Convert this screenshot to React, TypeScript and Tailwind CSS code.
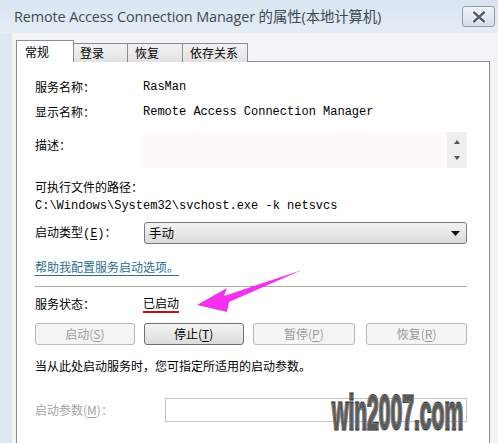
import React from "react";

const cjk = "font-['Noto_Sans_CJK_SC',sans-serif]";
const mono = "font-['Liberation_Mono','Noto_Sans_CJK_SC',monospace]";

const Key: React.FC<{ k: string }> = ({ k }) => (
  <>
    (<span className="underline underline-offset-2">{k}</span>)
  </>
);

const Btn: React.FC<{ label: string; k: string; enabled?: boolean; w: string }> = ({
  label,
  k,
  enabled,
  w,
}) => (
  <div
    className={`${w} h-[22px] flex items-center justify-center rounded-[3px] text-[12px] ${
      enabled
        ? "border border-[#707070] bg-gradient-to-b from-[#f4f4f4] to-[#dcdcdc] text-black"
        : "border border-[#b5b9bd] bg-[#f4f4f4] text-[#9a9a9a]"
    }`}
  >
    {label}
    <Key k={k} />
  </div>
);

const App: React.FC = () => {
  return (
    <div className={`relative w-[498px] h-[443px] overflow-hidden bg-[#dfe7f0] ${cjk}`}>
      {/* title bar */}
      <div className="h-[33px] flex items-center pl-[14px] pr-[3px] bg-gradient-to-b from-[#d9e4f0] to-[#e6edf5]">
        <span className="text-[14.4px] text-[#3e4852] font-['Open_Sans','Noto_Sans_CJK_SC',sans-serif] tracking-[-0.1px]">
          Remote Access Connection Manager 的属性(本地计算机)
        </span>
        <div className="ml-auto w-[33px] h-[21px] rounded-[3px] border border-[#8d9db2] bg-gradient-to-b from-[#eef3f9] to-[#d3deea] flex items-center justify-center">
          <svg width="14" height="12" viewBox="0 0 14 12">
            <path d="M2 1.5 L12 10.5 M12 1.5 L2 10.5" stroke="#fff" strokeWidth="4.5" strokeLinecap="round" />
            <path d="M2 1.5 L12 10.5 M12 1.5 L2 10.5" stroke="#56606c" strokeWidth="2.4" strokeLinecap="round" />
          </svg>
        </div>
      </div>

      {/* client area */}
      <div className="ml-[12px] h-[410px] bg-[#f3f4f6] pl-[4px] pr-[8px] pt-[7px]">
        {/* tabs */}
        <div className="flex items-end h-[22px] relative z-10 text-[12px] text-black">
          <div className="w-[58px] h-[22px] bg-white border border-b-0 border-[#898c95] pl-[8px] pt-[2px]">常规</div>
          <div className="w-[54px] h-[19px] bg-gradient-to-b from-[#f2f2f2] to-[#e2e2e2] border border-l-0 border-b-0 border-[#898c95] pl-[6px] leading-[18px]">登录</div>
          <div className="w-[55px] h-[19px] bg-gradient-to-b from-[#f2f2f2] to-[#e2e2e2] border border-l-0 border-b-0 border-[#898c95] pl-[7px] leading-[18px]">恢复</div>
          <div className="w-[65px] h-[19px] bg-gradient-to-b from-[#f2f2f2] to-[#e2e2e2] border border-l-0 border-b-0 border-[#898c95] pl-[7px] leading-[18px]">依存关系</div>
        </div>

        {/* panel */}
        <div className="-mt-px h-[390px] bg-white border border-[#898c95] pl-[18px] pr-[22px] pt-[15px] text-[12px] text-black">
          <div className="flex items-center h-[20px]">
            <span className="w-[108px]">服务名称：</span>
            <span className={mono}>RasMan</span>
          </div>
          <div className="flex items-center h-[20px] mt-[5px]">
            <span className="w-[108px]">显示名称：</span>
            <span className={mono}>Remote Access Connection Manager</span>
          </div>
          <div className="flex h-[36px] mt-[10px]">
            <span className="w-[108px] pt-[4px] leading-[18px]">描述：</span>
            <div className="flex-1 flex">
              <div className="flex-1 bg-[#fefafa]" />
              <div className="w-[20px] bg-[#efefef] flex flex-col items-center justify-between py-[8px]">
                <svg width="6" height="4" viewBox="0 0 6 4"><path d="M0 4 L3 0 L6 4Z" fill="#555" /></svg>
                <svg width="6" height="4" viewBox="0 0 6 4"><path d="M0 0 L3 4 L6 0Z" fill="#555" /></svg>
              </div>
            </div>
          </div>
          <div className="h-[19px] mt-[9px] flex items-center">可执行文件的路径：</div>
          <div className={`h-[19px] flex items-center ${mono}`}>C:\Windows\System32\svchost.exe -k netsvcs</div>
          <div className="flex items-center h-[22px] mt-[7px]">
            <span className="w-[109px]">
              启动类型<span className={mono}>(</span>
              <span className="underline underline-offset-2">E</span>
              <span className={mono}>)</span>：
            </span>
            <div className="flex-1 h-[22px] flex items-center rounded-[3px] border border-[#7a7a7a] bg-gradient-to-b from-[#f3f3f3] to-[#dadada] pl-[4px] pr-[6px]">
              <span className="text-[12.5px]">手动</span>
              <svg className="ml-auto" width="9" height="5" viewBox="0 0 9 5"><path d="M0 0 L9 0 L4.5 5Z" fill="#111" /></svg>
            </div>
          </div>
          <div className="h-[20px] mt-[13px] flex items-center">
            <span className="text-[#2a6f8e] underline underline-offset-[3px]">帮助我配置服务启动选项。</span>
          </div>
          <div className="h-px bg-[#a9a9a9] mt-[9px]" />
          <div className="flex items-center h-[20px] mt-[7px]">
            <span className="w-[108px]">服务状态：</span>
            <span className="border-b-2 border-[#c0101a] leading-[16px]">已启动</span>
          </div>
          <div className="flex h-[22px] mt-[9px] gap-[9px]">
            <Btn label="启动" k="S" w="w-[100px]" />
            <Btn label="停止" k="T" w="w-[100px]" enabled />
            <Btn label="暂停" k="P" w="w-[103px]" />
            <Btn label="恢复" k="R" w="w-[101px] ml-[2px]" />
          </div>
          <div className="h-[20px] mt-[11px] flex items-center">当从此处启动服务时，您可指定所适用的启动参数。</div>
          <div className="flex items-center h-[24px] mt-[22px]">
            <span className="w-[130px] text-[#a3a3a3]">
              启动参数<Key k="M" />：
            </span>
            <div className="flex-1 h-[24px] border border-[#c3c3c3] bg-white" />
          </div>
        </div>
      </div>

      {/* magenta arrow */}
      <svg className="absolute left-0 top-0 pointer-events-none" width="498" height="443" viewBox="0 0 498 443">
        <polygon points="197,305 227,288 224,296 302,270 229,302 227,312" fill="#f531f0" />
      </svg>

      {/* watermark */}
      <div className="absolute left-[332px] top-[388px] origin-left [transform:scaleX(0.43)] whitespace-nowrap font-['Liberation_Sans',sans-serif] font-bold text-[49px] leading-none text-[#5a5a5a] [-webkit-text-stroke:3px_#1a1a1a] [paint-order:stroke_fill] [text-shadow:0_0_3px_#ffffff]">
        win2007.com
      </div>
    </div>
  );
};

export default App;
